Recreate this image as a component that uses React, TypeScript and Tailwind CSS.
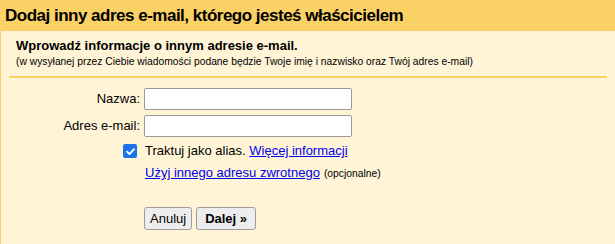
import React from "react";

export default function App() {
  const font = { fontFamily: '"Liberation Sans", Arial, sans-serif' };
  return (
    <div className="w-[615px] h-[244px] bg-[#FFF5D6] text-black overflow-hidden" style={font}>
      <div className="h-[31px] bg-[#FAD165] pl-[5px] flex items-center">
        <h1 className="text-[17px] font-bold leading-none tracking-[-0.5px]">Dodaj inny adres e-mail, którego jesteś właścicielem</h1>
      </div>
      <div className="border-l border-[#FAD165] h-[213px] pl-[8px] pr-[8px]">
        <div className="pl-[7px] pt-[7px] pb-[8px] border-b-2 border-[#FAD165]">
          <div className="text-[13px] font-bold leading-[15px]">Wprowadź informacje o innym adresie e-mail.</div>
          <div className="text-[10.3px] leading-[13px] mt-[2px]">(w wysyłanej przez Ciebie wiadomości podane będzie Twoje imię i nazwisko oraz Twój adres e-mail)</div>
        </div>
        <div className="-ml-[8px] mt-[10px] flex flex-col gap-[5px]">
          <div className="flex items-center">
            <label className="w-[140px] text-right text-[13px] pr-[1px]">Nazwa:</label>
            <input className="ml-[3px] w-[208px] h-[22px] bg-white border border-[#9a9a9a] rounded-[2px] outline-none" />
          </div>
          <div className="flex items-center">
            <label className="w-[140px] text-right text-[13px] pr-[1px]">Adres e-mail:</label>
            <input className="ml-[3px] w-[208px] h-[22px] bg-white border border-[#9a9a9a] rounded-[2px] outline-none" />
          </div>
        </div>
        <div className="-ml-[8px] mt-[6px] flex items-center h-[16px]">
          <div className="w-[122px]" />
          <span className="w-[14px] h-[14px] rounded-[2px] bg-[#1A73E8] flex items-center justify-center">
            <svg width="11" height="11" viewBox="0 0 12 12">
              <path d="M2.2 6.2 L4.9 8.8 L9.9 3.4" stroke="white" strokeWidth="2" fill="none" strokeLinecap="round" strokeLinejoin="round" />
            </svg>
          </span>
          <span className="ml-[8px] text-[13px]">Traktuj jako alias. <a className="text-[#0000EE] underline" href="#">Więcej informacji</a></span>
        </div>
        <div className="-ml-[8px] mt-[4px] flex items-baseline h-[16px]">
          <div className="w-[144px]" />
          <a className="text-[#0000EE] underline text-[13px]" href="#">Użyj innego adresu zwrotnego</a>
          <span className="ml-[4px] text-[10.3px]">(opcjonalne)</span>
        </div>
        <div className="-ml-[8px] mt-[28px] flex">
          <div className="w-[143px]" />
          <button className="h-[23px] px-[5px] text-[13px] bg-[#EDEDEF] border border-[#9b9b9b] rounded-[3px]">Anuluj</button>
          <button className="ml-[4px] h-[23px] px-[8px] text-[13px] font-bold bg-[#EDEDEF] border border-[#9b9b9b] rounded-[3px]">Dalej »</button>
        </div>
      </div>
    </div>
  );
}
